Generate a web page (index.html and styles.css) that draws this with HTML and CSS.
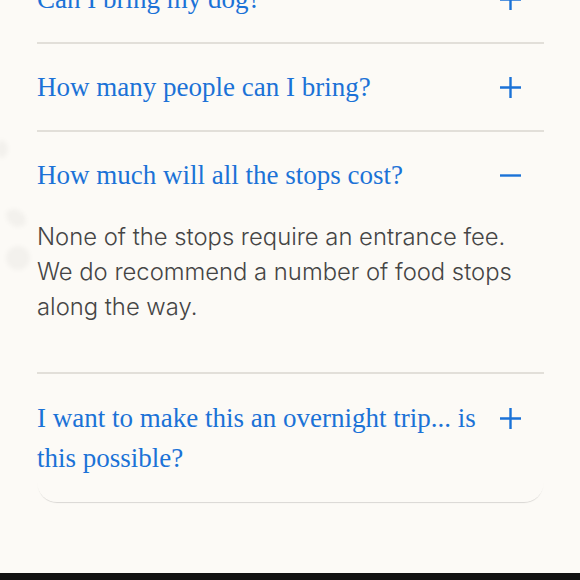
FILE: index.html
```html
<!DOCTYPE html>
<html lang="en">
<head>
  <meta charset="UTF-8">
  <title>FAQ</title>
  <link rel="stylesheet" href="styles.css">
</head>
<body>

  <!-- faint blobs on the left edge -->
  <span class="blob blob-a"></span>
  <span class="blob blob-b"></span>
  <span class="blob blob-c"></span>

  <div class="faq">
    <div class="item">
      <div class="q">
        <span class="q-text">Can I bring my dog?</span>
        <span class="icon">
          <svg width="21" height="21" viewBox="0 0 21 21"><path d="M10.5 0v21M0 10.5h21"/></svg>
        </span>
      </div>
    </div>

    <div class="item">
      <div class="q">
        <span class="q-text">How many people can I bring?</span>
        <span class="icon">
          <svg width="21" height="21" viewBox="0 0 21 21"><path d="M10.5 0v21M0 10.5h21"/></svg>
        </span>
      </div>
    </div>

    <div class="item open">
      <div class="q">
        <span class="q-text">How much will all the stops cost?</span>
        <span class="icon">
          <svg width="21" height="21" viewBox="0 0 21 21"><path d="M0 10.5h21"/></svg>
        </span>
      </div>
      <p class="answer">None of the stops require an entrance fee.<br>We do recommend a number of food stops along the way.</p>
    </div>

    <div class="item">
      <div class="q">
        <span class="q-text">I want to make this an overnight trip... is this possible?</span>
        <span class="icon">
          <svg width="21" height="21" viewBox="0 0 21 21"><path d="M10.5 0v21M0 10.5h21"/></svg>
        </span>
      </div>
    </div>
  </div>

  <div class="bottom-bar"></div>

</body>
</html>
```

FILE: styles.css
```css
/* ------------- RESET & BASE ------------- */
* { margin: 0; padding: 0; box-sizing: border-box; }
body {
  background: #fcfaf6;
  height: 100vh;
  overflow: hidden;
  display: flex;
  flex-direction: column;
  position: relative;
}

/* ------------- FAQ CARD ------------- */
.faq {
  margin: -44px 36px 0 37px;
  background: #fcfaf6;
  border-radius: 0 0 20px 20px;
  box-shadow: 0 2px 1px -1px rgba(0,0,0,0.14);
}
.item + .item { border-top: 2px solid #e2dfd9; }

.q {
  display: flex; align-items: flex-start;
  gap: 12px;
  padding: 23px 23px 23px 0;
  color: #1b72d7;
  font-family: 'Liberation Serif', serif;
  font-size: 27px; line-height: 40px;
}
.item:last-child .q { padding: 24px 23px 24px 0; }
.q-text { flex: 1; }
.icon {
  height: 40px; width: 21px;
  display: flex; align-items: center;
}
.icon svg { stroke: #1b72d7; stroke-width: 2.4; fill: none; }

.answer {
  padding: 1px 0 48px 0;
  font-family: 'Inter', sans-serif;
  font-weight: 300;
  font-size: 23.8px; line-height: 35px;
  color: #454545;
}

/* ------------- DECOR ------------- */
.blob {
  position: absolute;
  background: rgba(0,0,0,0.035);
  border-radius: 50%;
  filter: blur(2px);
}
.blob-a { left: 5px; top: 210px; width: 22px; height: 16px; transform: rotate(35deg); }
.blob-b { left: 6px; top: 246px; width: 24px; height: 24px; }
.blob-c { left: -4px; top: 140px; width: 12px; height: 18px; }

/* ------------- BOTTOM BAR ------------- */
.bottom-bar {
  margin-top: auto;
  height: 7px;
  background: #111;
}
```
